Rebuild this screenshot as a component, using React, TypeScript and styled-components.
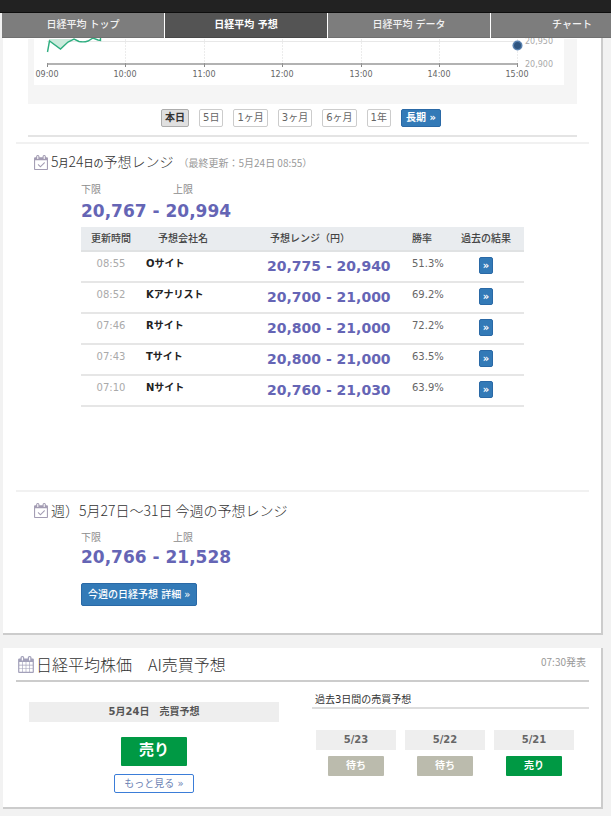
import React from "react";
import styled, { createGlobalStyle } from "styled-components";

const GlobalStyle = createGlobalStyle`
  *, *::before, *::after { box-sizing: border-box; }
  body {
    margin: 0;
    background: #f2f2f2;
    color: #555;
    font-family: "DejaVu Sans", "Noto Sans CJK JP", sans-serif;
    font-size: 10px;
    line-height: 14px;
    overflow-x: hidden;
  }
  h2, h3, p { margin: 0; font-weight: 400; }
  a { text-decoration: none; }
`;

const Page = styled.div`
  overflow: hidden;
  padding-bottom: 6px;
`;

const TopBar = styled.header`
  height: 13px;
  background: #222;
  border-bottom: 1px solid #0e0e0e;
`;

const Nav = styled.nav`
  position: relative;
  z-index: 1;
  display: flex;
  gap: 1px;
  margin-left: 2px;
  height: 25px;
  background: #fff;
`;

const NavLink = styled.a<{ $active?: boolean }>`
  flex: 0 0 162px;
  display: flex;
  align-items: center;
  justify-content: center;
  background: ${(p) => (p.$active ? "#545454" : "#7d7d7d")};
  border-bottom: 1px solid ${(p) => (p.$active ? "#484848" : "#707070")};
  color: ${(p) => (p.$active ? "#fff" : "#f2f2f2")};
  font-weight: ${(p) => (p.$active ? 700 : 500)};
`;

const Card = styled.section`
  margin: 0 8px 0 3px;
  background: #fff;
  border: solid #ccc;
  border-width: 0 2px 2px 0;
`;

const MainCard = styled(Card)`
  padding: 1px 12px 27px 13px;
`;

const AiCard = styled(Card)`
  margin-top: 13px;
  padding: 6px 12px 14px 13px;
`;

const ChartArea = styled.div`
  margin: 0 12px;
  padding-bottom: 8px;
  border-bottom: 2px solid #e4e4e4;
`;

const ChartPanel = styled.div`
  padding: 0 13px 19px 6px;
  background: #f5f5f5;
`;

const ChartSvg = styled.svg`
  display: block;
  width: 100%;
  background: #fff;
  overflow: visible;
  font-family: "DejaVu Sans", sans-serif;
  font-size: 8px;
`;

const PeriodRow = styled.div`
  display: flex;
  justify-content: center;
  gap: 10px;
  margin: 5px 3px 0 0;
`;

const PeriodButton = styled.button<{ $active?: boolean }>`
  height: 18px;
  padding: 0 3px;
  border: 1px solid ${(p) => (p.$active ? "#adadad" : "#ccc")};
  border-radius: 2px;
  background: ${(p) => (p.$active ? "#e0e0e0" : "#fff")};
  color: ${(p) => (p.$active ? "#333" : "#666")};
  font-family: inherit;
  font-size: 10px;
  line-height: 16px;
  font-weight: ${(p) => (p.$active ? 700 : 400)};
`;

const BlueLink = styled.a<{ $size: "mini" | "small" | "medium" }>`
  display: inline-flex;
  align-items: center;
  justify-content: center;
  height: ${(p) => ({ mini: 17, small: 18, medium: 23 })[p.$size]}px;
  padding: 0 ${(p) => ({ mini: 3, small: 4, medium: 6 })[p.$size]}px;
  border: 1px solid #2a69a6;
  border-radius: 2px;
  background: #337ab7;
  color: #fff;
  font-weight: ${(p) => (p.$size === "medium" ? 500 : 700)};
`;

const Forecast = styled.section<{ $spaced?: boolean }>`
  margin-top: ${(p) => (p.$spaced ? 83 : 5)}px;
  padding-top: 8px;
  border-top: 2px solid #f1f1f1;
`;

const Heading = styled.h2`
  display: flex;
  align-items: center;
  gap: 3px;
  height: 20px;
  margin-left: 18px;
  color: #333;
  font-family: "Noto Sans CJK JP", sans-serif;
  font-size: 14px;
  line-height: 20px;
  font-weight: 300;
  white-space: nowrap;

  svg { flex: none; }
`;

const SmallKanji = styled.span`
  font-size: 10px;
  font-weight: 400;
`;

const Updated = styled.small`
  margin-left: 2px;
  padding-top: 2px;
  color: #999;
  font-size: 10px;
  font-weight: 400;
`;

const ForecastBody = styled.div`
  margin: 11px 65px 0;
`;

const Limits = styled.div`
  display: flex;
  gap: 72px;
  color: #8c8c8c;
`;

const RangeValue = styled.p<{ $tight?: boolean }>`
  margin-top: ${(p) => (p.$tight ? 2 : 4)}px;
  color: #6565b5;
  font-size: 17px;
  line-height: 20px;
  font-weight: 700;
`;

const Table = styled.table`
  width: 100%;
  margin-top: 6px;
  table-layout: fixed;
  border-collapse: separate;
  border-spacing: 0;
  white-space: nowrap;
`;

const Th = styled.th<{ $indent?: number }>`
  height: 25px;
  padding: 0 0 0 ${(p) => p.$indent ?? 0}px;
  border-bottom: 2px solid #e0e2e3;
  background: #e9ecef;
  color: #444;
  font-weight: 500;
  text-align: ${(p) => (p.$indent ? "left" : "center")};
`;

const Td = styled.td<{ $kind: "time" | "name" | "range" | "rate" | "link" }>`
  height: 31px;
  padding: ${(p) =>
    ({
      time: "5px 0 0",
      name: "5px 0 0 5px",
      range: "4px 0 0 5px",
      rate: "5px 0 0 5px",
      link: "5px 0 0",
    })[p.$kind]};
  border-bottom: 2px solid #e6e6e6;
  vertical-align: top;
  text-align: ${(p) => (p.$kind === "time" || p.$kind === "link" ? "center" : "left")};
  color: ${(p) =>
    ({ time: "#aaa", name: "#222", range: "#6565b5", rate: "#666", link: "#fff" })[p.$kind]};
  font-weight: ${(p) => (p.$kind === "name" || p.$kind === "range" ? 700 : 400)};
  font-size: ${(p) => (p.$kind === "range" ? 14 : 10)}px;
  line-height: ${(p) => (p.$kind === "range" ? 20 : 14)}px;
`;

const DetailRow = styled.div`
  display: flex;
  margin-top: 16px;
`;

const AiHead = styled.header`
  display: flex;
  align-items: flex-start;
  justify-content: space-between;
  padding: 0 3px 6px 2px;
  border-bottom: 2px solid #ccc;
`;

const AiTitle = styled(Heading)`
  gap: 2px;
  margin-left: 0;
  font-size: 16px;
`;

const Announced = styled.time`
  padding-top: 1px;
  color: #999;
  font-family: "Noto Sans CJK JP", sans-serif;
`;

const AiGrid = styled.div`
  display: grid;
  grid-template-columns: 250fr 277fr;
  column-gap: 33px;
  padding-left: 13px;
`;

const Today = styled.div`
  display: flex;
  flex-direction: column;
  align-items: center;
  padding-top: 20px;
`;

const DateBar = styled.h3`
  width: 100%;
  height: 20px;
  background: #eee;
  color: #555;
  font-size: 10px;
  line-height: 20px;
  font-weight: 700;
  text-align: center;
`;

const Signal = styled.span<{ $sell?: boolean; $large?: boolean }>`
  display: flex;
  align-items: center;
  justify-content: center;
  width: ${(p) => (p.$large ? 66 : 56)}px;
  height: ${(p) => (p.$large ? 29 : 20)}px;
  padding-bottom: ${(p) => (p.$large ? 4 : 1)}px;
  margin-top: ${(p) => (p.$large ? 15 : 6)}px;
  border-radius: 1px;
  background: ${(p) => (p.$sell ? "#009944" : "#bbbbad")};
  color: #fff;
  font-size: ${(p) => (p.$large ? 15 : 10)}px;
  font-weight: 700;
`;

const MoreLink = styled.a`
  display: flex;
  align-items: center;
  height: 19px;
  margin-top: 8px;
  padding: 0 9px;
  border: 1px solid #3b7dd8;
  border-radius: 2px;
  color: #6e84b4;
`;

const History = styled.div`
  padding-top: 11px;
`;

const HistoryTitle = styled.h3`
  height: 16px;
  padding-left: 3px;
  border-bottom: 2px solid #ddd;
  color: #333;
  font-size: 10px;
  line-height: 14px;
  font-weight: 400;
`;

const Days = styled.div`
  display: grid;
  grid-template-columns: repeat(3, 1fr);
  column-gap: 9px;
  margin: 21px 15px 0 4px;
`;

const Day = styled.div`
  display: flex;
  flex-direction: column;
  align-items: center;
`;

const DayLabel = styled(DateBar)`
  color: #666;
`;

const calendarFrame =
  "m384 0v-288q0-13-9.500-22.500t-22.500-9.500h-64q-13 0-22.500 9.500t-9.500 22.500v288q0 13 9.500 22.500t22.500 9.500h64q13 0 22.500-9.500t9.500-22.500zm768 0v-288q0-13-9.500-22.500t-22.500-9.500h-64q-13 0-22.500 9.500t-9.500 22.500v288q0 13 9.500 22.500t22.500 9.500h64q13 0 22.500-9.500t9.500-22.500zm384-64v1280q0 52-38 90t-90 38h-1408q-52 0-90-38t-38-90v-1280q0-52 38-90t90-38h128v-96q0-66 47-113t113-47h64q66 0 113 47t47 113v96h384v-96q0-66 47-113t113-47h64q66 0 113 47t47 113v96h128q52 0 90 38t38 90z";

function CalendarCheck() {
  return (
    <svg width="14" height="15" viewBox="0 0 1664 1792" fill="#a39cb3" aria-hidden="true">
      <path
        d={
          "M1303 964l-512 512q-10 9-23 9t-23-9l-288-288q-9-10-9-23t9-22l46-46q9-9 22-9t23 9l220 220 444-444q10-9 23-9t22 9l46 46q9 9 9 22t-9 23z" +
          "M128 1664h1408v-1024h-1408v1024zM128 448" +
          calendarFrame
        }
      />
    </svg>
  );
}

function CalendarGrid() {
  return (
    <svg width="16" height="17" viewBox="0 0 1664 1792" fill="#a3a1ba" aria-hidden="true">
      <path
        d={
          "M128 1664h288v-288h-288zM480 1664h320v-288h-320zM864 1664h320v-288h-320zM1248 1664h288v-288h-288z" +
          "M128 1312h288v-320h-288zM480 1312h320v-320h-320zM864 1312h320v-320h-320zM1248 1312h288v-320h-288z" +
          "M128 928h288v-288h-288zM480 928h320v-288h-320zM864 928h320v-288h-320zM1248 928h288v-288h-288z" +
          "M128 448" +
          calendarFrame
        }
        fillRule="evenodd"
      />
    </svg>
  );
}

const ticks = ["09:00", "10:00", "11:00", "12:00", "13:00", "14:00", "15:00"];
const tickX = (i: number) => Math.round(13 + i * 78.4);

function Chart() {
  return (
    <ChartSvg viewBox="0 0 530 46" role="img" aria-label="日経平均 本日">
      <line x1="13" x2="483" y1="2.5" y2="2.5" stroke="#e8e8e8" />
      {ticks.map((t, i) => (
        <g key={t}>
          {i > 0 && (
            <line x1={tickX(i) + 0.5} x2={tickX(i) + 0.5} y1="0" y2="24" stroke="#ececec" strokeDasharray="2 1" />
          )}
          <line x1={tickX(i) + 0.5} x2={tickX(i) + 0.5} y1="24" y2="28" stroke="#888" />
          <text x={tickX(i)} y="38" textAnchor="middle" fill="#666">
            {t}
          </text>
        </g>
      ))}
      <line x1="13" x2="484" y1="25" y2="25" stroke="#999" strokeWidth="1.400" />
      <path d="M13.500 13L15.500 2L26.500 10L34 3L38 0H15z" fill="#cdebdd" />
      <path
        d="M13.500 13L15.500 2L26.500 10L34 3L40 0L45 2.500Q50 3.500 54 2L59 -1L64 1L66.500 1.500V-1"
        fill="none"
        stroke="#2fae80"
        strokeWidth="1.400"
      />
      <circle cx="483.500" cy="6.500" r="5" fill="#5a82b0" />
      <circle cx="483.500" cy="6.500" r="3.500" fill="#2f5580" />
      <g fill="#aaa">
        <text x="491" y="5">20,950</text>
        <text x="491" y="28">20,900</text>
      </g>
    </ChartSvg>
  );
}

const forecasts = [
  ["08:55", "Oサイト", "20,775 - 20,940", "51.3%"],
  ["08:52", "Kアナリスト", "20,700 - 21,000", "69.2%"],
  ["07:46", "Rサイト", "20,800 - 21,000", "72.2%"],
  ["07:43", "Tサイト", "20,800 - 21,000", "63.5%"],
  ["07:10", "Nサイト", "20,760 - 21,030", "63.9%"],
];

const history = [
  { day: "5/23", signal: "待ち", sell: false },
  { day: "5/22", signal: "待ち", sell: false },
  { day: "5/21", signal: "売り", sell: true },
];

export default function App() {
  return (
    <Page>
      <GlobalStyle />
      <TopBar />
      <Nav>
        <NavLink href="#top">日経平均 トップ</NavLink>
        <NavLink href="#forecast" $active>日経平均 予想</NavLink>
        <NavLink href="#data">日経平均 データ</NavLink>
        <NavLink href="#chart">チャート</NavLink>
      </Nav>

      <MainCard>
        <ChartArea>
          <ChartPanel>
            <Chart />
          </ChartPanel>
          <PeriodRow>
            {["本日", "5日", "1ヶ月", "3ヶ月", "6ヶ月", "1年"].map((p, i) => (
              <PeriodButton key={p} type="button" $active={i === 0}>
                {p}
              </PeriodButton>
            ))}
            <BlueLink href="#long" $size="small">長期 »</BlueLink>
          </PeriodRow>
        </ChartArea>

        <Forecast>
          <Heading>
            <CalendarCheck />
            <span>
              5<SmallKanji>月</SmallKanji>24<SmallKanji>日の</SmallKanji>予想レンジ
            </span>
            <Updated>（最終更新：5月24日 08:55）</Updated>
          </Heading>
          <ForecastBody>
            <Limits>
              <span>下限</span>
              <span>上限</span>
            </Limits>
            <RangeValue>20,767 - 20,994</RangeValue>
            <Table>
              <colgroup>
                <col width="60" />
                <col width="121" />
                <col />
                <col width="41" />
                <col width="76" />
              </colgroup>
              <thead>
                <tr>
                  <Th>更新時間</Th>
                  <Th $indent={17}>予想会社名</Th>
                  <Th $indent={8}>予想レンジ（円）</Th>
                  <Th $indent={5}>勝率</Th>
                  <Th>過去の結果</Th>
                </tr>
              </thead>
              <tbody>
                {forecasts.map(([time, name, range, rate]) => (
                  <tr key={name}>
                    <Td $kind="time">{time}</Td>
                    <Td $kind="name">{name}</Td>
                    <Td $kind="range">{range}</Td>
                    <Td $kind="rate">{rate}</Td>
                    <Td $kind="link">
                      <BlueLink href="#results" $size="mini" aria-label={`${name} 過去の結果`}>»</BlueLink>
                    </Td>
                  </tr>
                ))}
              </tbody>
            </Table>
          </ForecastBody>
        </Forecast>

        <Forecast $spaced>
          <Heading>
            <CalendarCheck />
            <span>週）5月27日～31日 今週の予想レンジ</span>
          </Heading>
          <ForecastBody>
            <Limits>
              <span>下限</span>
              <span>上限</span>
            </Limits>
            <RangeValue $tight>20,766 - 21,528</RangeValue>
            <DetailRow>
              <BlueLink href="#week" $size="medium">今週の日経予想 詳細 »</BlueLink>
            </DetailRow>
          </ForecastBody>
        </Forecast>
      </MainCard>

      <AiCard>
        <AiHead>
          <AiTitle>
            <CalendarGrid />
            <span>日経平均株価　AI売買予想</span>
          </AiTitle>
          <Announced>07:30発表</Announced>
        </AiHead>
        <AiGrid>
          <Today>
            <DateBar>5月24日　売買予想</DateBar>
            <Signal $sell $large>売り</Signal>
            <MoreLink href="#more">もっと見る »</MoreLink>
          </Today>
          <History>
            <HistoryTitle>過去3日間の売買予想</HistoryTitle>
            <Days>
              {history.map(({ day, signal, sell }) => (
                <Day key={day}>
                  <DayLabel>{day}</DayLabel>
                  <Signal $sell={sell}>{signal}</Signal>
                </Day>
              ))}
            </Days>
          </History>
        </AiGrid>
      </AiCard>
    </Page>
  );
}
